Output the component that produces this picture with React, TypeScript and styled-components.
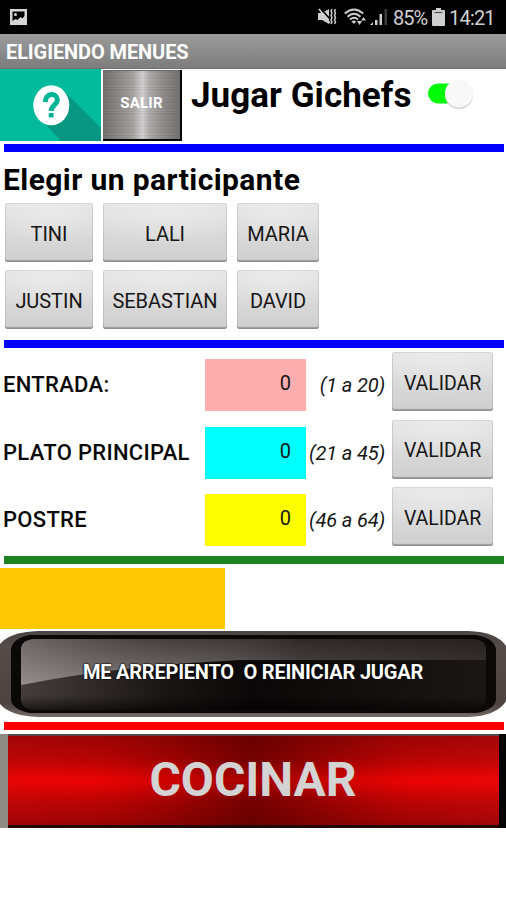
import React, { useState } from 'react';
import styled, { createGlobalStyle } from 'styled-components';

const GlobalStyle = createGlobalStyle`
  * { box-sizing: border-box; }
  body { margin: 0; background: #fff; font-family: Roboto, "Liberation Sans", sans-serif; color: #161616; }
  button { font-family: inherit; padding: 0; border: 0; margin: 0; color: inherit; }
`;

const Screen = styled.main`
  width: 506px;
  height: 900px;
  overflow: hidden;
  background: #fff;
  display: flex;
  flex-direction: column;
`;

const StatusBar = styled.header`
  height: 34px;
  flex: none;
  background: #000;
  display: flex;
  align-items: center;
  justify-content: space-between;
  padding: 0 11px 0 10px;
`;

const StatusIcons = styled.div`
  display: flex;
  align-items: center;
  color: #cfcfcf;
  svg { display: block; }
`;

const SignalGroup = styled.div`
  display: flex;
  gap: 3px;
  margin: 0 5px 0 7px;
`;

const StatusText = styled.span<{ $width: number; $spacing: number }>`
  width: ${(p) => p.$width}px;
  white-space: nowrap;
  font-size: 20px;
  line-height: 34px;
  padding-top: 1px;
  letter-spacing: ${(p) => p.$spacing}px;
`;

const Clock = styled(StatusText)`
  margin-left: 4px;
`;

const TitleBar = styled.div`
  height: 35px;
  flex: none;
  background: linear-gradient(#9b9b9b, #7d7d7d);
  border-bottom: 1px solid #707070;
  padding-left: 6px;
  color: #fff;
  font-size: 20px;
  font-weight: 700;
  line-height: 36px;
  white-space: nowrap;
  letter-spacing: -0.1px;
`;

const HeaderRow = styled.div`
  height: 72px;
  flex: none;
  display: flex;
`;

const HelpButton = styled.button`
  width: 101px;
  height: 72px;
  background: #04ba9c;
  svg { display: block; }
`;

const ExitButton = styled.button`
  width: 79px;
  height: 71px;
  margin: 1px 0 0 2px;
  padding: 0 2px 6px 0;
  box-shadow: inset -2px -2px #060606, inset 1px 1px #6b6b6b;
  color: #fff;
  font-size: 15px;
  font-weight: 700;
  letter-spacing: 0.2px;
  background:
    repeating-linear-gradient(180deg, rgba(255,255,255,0.04) 0 1px, rgba(0,0,0,0.02) 1px 3px, rgba(255,255,255,0.03) 3px 5px, rgba(0,0,0,0.03) 5px 6px),
    linear-gradient(90deg, #716d6d 0%, #8e8a8a 22%, #a3a0a0 38%, #cfcece 50%, #aaa7a7 59%, #8b8787 78%, #6e6a6a 100%);
`;

const GameTitle = styled.h1`
  margin: 0 0 0 9px;
  width: 237px;
  font-size: 35px;
  line-height: 53px;
  font-weight: 700;
  letter-spacing: 0.05px;
  white-space: nowrap;
  color: #000;
`;

const Toggle = styled.button`
  width: 46px;
  height: 36px;
  margin-top: 7px;
  background: none;
  svg { display: block; overflow: visible; }
`;

const Divider = styled.hr<{ $color: string; $top: number; $bottom: number }>`
  flex: none;
  width: 500px;
  height: 8px;
  border: 0;
  margin: ${(p) => p.$top}px 0 ${(p) => p.$bottom}px 4px;
  background: ${(p) => p.$color};
`;

const SectionTitle = styled.h2`
  margin: 0;
  padding: 7px 0 0 3px;
  height: 51px;
  flex: none;
  font-size: 30px;
  line-height: 42px;
  font-weight: 700;
  letter-spacing: 0.42px;
  white-space: nowrap;
  color: #000;
`;

const PlayerGrid = styled.div`
  flex: none;
  display: grid;
  grid-template-columns: 88px 124px 82px;
  gap: 8px 10px;
  padding-left: 5px;
`;

const GreyButton = styled.button`
  height: 59px;
  padding-top: 2px;
  border-radius: 2px;
  background: radial-gradient(ellipse 80% 70% at 50% 0, #ebebeb, transparent), linear-gradient(#e4e4e4, #cfcfcf);
  box-shadow: inset 0 0 0 1px rgba(0,0,0,0.07), inset 0 -2px 1px #9a9a9a;
  font-size: 20px;
  letter-spacing: -0.05px;
  white-space: nowrap;
`;

const ValidateButton = styled(GreyButton)`
  padding-top: 3px;
  font-size: 19.5px;
`;

const MenuRows = styled.section`
  flex: none;
  display: grid;
  gap: 8.5px;
  padding-left: 4px;
`;

const MenuRow = styled.div`
  height: 59px;
  display: grid;
  grid-template-columns: 201px 101px 86px 101px;
`;

const MenuLabel = styled.label`
  font-size: 22px;
  font-weight: 500;
  line-height: 65px;
  letter-spacing: 0.3px;
  margin-left: -1px;
  white-space: nowrap;
  color: #0a0a0a;
`;

const NumberField = styled.div<{ $color: string }>`
  height: 52px;
  margin-top: 7px;
  padding-right: 15px;
  background: ${(p) => p.$color};
  font-size: 20px;
  line-height: 48px;
  text-align: right;
`;

const Range = styled.span`
  padding-right: 7px;
  font-size: 20px;
  font-style: italic;
  line-height: 66px;
  letter-spacing: -0.15px;
  text-align: right;
  white-space: nowrap;
`;

const ResultBox = styled.div`
  flex: none;
  width: 225px;
  height: 61px;
  background: #ffc805;
`;

const ResetButton = styled.button`
  flex: none;
  display: grid;
  width: 506px;
  height: 86px;
  margin-top: 2px;
  background: none;
  svg, span { grid-area: 1 / 1; }
  svg { display: block; }
`;

const ResetText = styled.span`
  z-index: 1;
  color: #fff;
  font-size: 20px;
  font-weight: 700;
  line-height: 83px;
  letter-spacing: -0.21px;
  white-space: pre;
  text-shadow: 0 0 2px #000, 0 0 2px #000;
`;

const CookButton = styled.button`
  flex: none;
  width: 506px;
  height: 94px;
  padding-bottom: 3px;
  box-shadow: inset 8px 0 #8f8b87, inset -7px 0 #050505, inset 0 2px #5a4848, inset 0 -3px #240505;
  background:
    linear-gradient(rgba(50,0,0,0.35) 0%, rgba(60,0,0,0.22) 28%, rgba(255,0,0,0.3) 50%, rgba(60,0,0,0.2) 70%, rgba(50,0,0,0.38) 100%),
    radial-gradient(ellipse 130px 55px at 17% 52%, rgba(255,0,0,0.45), transparent),
    radial-gradient(ellipse 130px 55px at 84% 52%, rgba(255,0,0,0.45), transparent),
    linear-gradient(90deg, #de0909 0%, #cd0606 20%, #b00303 35%, #850101 50%, #a60303 62%, #cd0606 80%, #e00b0b 100%);
  color: #d3d3d3;
  font-size: 48px;
  font-weight: 700;
  line-height: 91px;
  text-align: center;
`;

const PictureIcon = () => (
  <svg width="17" height="17" viewBox="0 0 17 17">
    <path fill="#d5d5d5" fillRule="evenodd" d="M0 0h17v16H0zM2.500 2.500V12l3-2 2 1 3-3 2 1.500L14.500 7V2.500z" />
    <circle cx="5.500" cy="5.500" r="1.500" fill="#d5d5d5" />
  </svg>
);

const MuteIcon = () => (
  <svg width="19" height="18" viewBox="0 0 19 18" fill="none" stroke="currentColor">
    <path d="M0 5h4l7-4v15l-7-4H0z" fill="currentColor" stroke="none" />
    <path d="M3 1l9 10" stroke="#000" strokeWidth="1.500" />
    <path d="M1 1l11 14" strokeWidth="1.600" />
    <path d="M14 1l-1 2 1 2-1 2.500 1 2-1 2.500 1 2-1 2M17.500 1l-1 2 1 2-1 2.500 1 2-1 2.500 1 2-1 2" strokeWidth="1.500" />
  </svg>
);

const WifiIcon = () => (
  <svg width="23" height="18" viewBox="0 0 23 18" fill="none" stroke="currentColor" strokeWidth="1.900">
    <path d="M.8 5.500Q10 -2.500 19.200 5.500M3.500 8.700Q10 2.800 16.500 8.700M6 11.500Q10 8 14 11.500" />
    <path d="M7.500 13.500Q10 11.500 12 13.500L10 16z" fill="currentColor" stroke="none" />
    <path d="M13 13h5l-2.500 4zM17 12.500h5L19.500 9z" fill="currentColor" stroke="none" />
  </svg>
);

const SignalIcon = () => (
  <svg width="18" height="18" viewBox="0 0 18 18" fill="currentColor">
    <path d="M0 17l3-3v3zM5 12h2.500v5H5zM9.500 6H12v11H9.500z" />
    <path d="M14.500 1H17v16h-2.500z" fill="#3c3c3c" />
  </svg>
);

const BatteryIcon = () => (
  <svg width="13" height="18" viewBox="0 0 13 18">
    <path d="M4 0h5v2h3q1 0 1 1v14q0 1-1 1H1q-1 0-1-1V3q0-1 1-1h3z" fill="#cfcfcf" />
    <path d="M2.500 4.500h8" stroke="#555" strokeWidth="1.200" />
  </svg>
);

const HelpIcon = () => (
  <svg width="101" height="72" viewBox="0 0 101 72">
    <path d="M64 22L101 59V72H61L40 49z" fill="#079781" />
    <ellipse cx="51.300" cy="36.300" rx="18" ry="20" fill="#fff" />
    <path d="M45.300 33c0-9.500 12-9.500 12-2.300 0 5.300-6 5-6 11.300" fill="none" stroke="#06b497" strokeWidth="5" />
    <rect x="48.700" y="44" width="5" height="4.600" rx="1" fill="#06b497" />
  </svg>
);

const Gloss = () => (
  <svg width="506" height="86" viewBox="0 0 506 86">
    <defs>
      <linearGradient id="rim" x2="0" y2="1">
        <stop offset="0" stopColor="#4a4442" /><stop offset=".2" stopColor="#554c4a" />
        <stop offset=".85" stopColor="#4c4341" /><stop offset="1" stopColor="#766c6a" />
      </linearGradient>
      <linearGradient id="face">
        <stop offset="0" stopColor="#453d3c" /><stop offset=".3" stopColor="#1b1717" />
        <stop offset=".5" stopColor="#090707" /><stop offset="1" stopColor="#1c1717" />
      </linearGradient>
      <linearGradient id="shine" x2="0" y2="1">
        <stop offset="0" stopColor="#3f3a38" /><stop offset="1" stopColor="#857c7c" />
      </linearGradient>
      <linearGradient id="fade">
        <stop offset="0" stopColor="#aaa0a0" stopOpacity=".45" /><stop offset=".35" stopColor="#555" stopOpacity=".15" />
        <stop offset=".6" stopColor="#151111" stopOpacity=".4" />
        <stop offset="1" stopColor="#151111" stopOpacity=".6" />
      </linearGradient>
      <linearGradient id="depth" x2="0" y2="1">
        <stop offset=".5" stopOpacity="0" /><stop offset="1" stopOpacity=".6" />
      </linearGradient>
    </defs>
    <path d="M38 0H468Q497 1 506 15V70Q497 85 468 86H38Q10 85 0 73V13Q10 1 38 0z" fill="url(#rim)" />
    <path d="M30 4H476Q494 7 496 18V69Q494 79 476 82H30Q13 79 11 69V18Q13 7 30 4z" fill="#0b0808" />
    <path d="M34 8H472Q485 9 486 17V70Q485 77 472 79H34Q22 77 21 70V17Q22 9 34 8z" fill="url(#face)" />
    <path d="M34 8H472Q485 9 486 17V29H240Q115 35 21 54V17Q22 9 34 8z" fill="url(#shine)" />
    <path d="M34 8H472Q485 9 486 17V29H240Q115 35 21 54V17Q22 9 34 8z" fill="url(#fade)" />
    <path d="M21 50H486V70Q485 77 472 79H34Q22 77 21 70z" fill="url(#depth)" />
  </svg>
);

const players = ['TINI', 'LALI', 'MARIA', 'JUSTIN', 'SEBASTIAN', 'DAVID'];
const courses = [
  { label: 'ENTRADA:', color: '#ffaeb0', range: '(1 a 20)' },
  { label: 'PLATO PRINCIPAL', color: '#00ffff', range: '(21 a 45)' },
  { label: 'POSTRE', color: '#ffff00', range: '(46 a 64)' },
];

export default function App() {
  const [playing, setPlaying] = useState(true);
  return (
    <Screen>
      <GlobalStyle />
      <StatusBar>
        <PictureIcon />
        <StatusIcons>
          <MuteIcon />
          <SignalGroup>
            <WifiIcon />
            <SignalIcon />
          </SignalGroup>
          <StatusText $width={39} $spacing={-1}>85%</StatusText>
          <BatteryIcon />
          <Clock $width={46} $spacing={-0.8}>14:21</Clock>
        </StatusIcons>
      </StatusBar>
      <TitleBar>ELIGIENDO MENUES</TitleBar>
      <HeaderRow>
        <HelpButton aria-label="Ayuda"><HelpIcon /></HelpButton>
        <ExitButton>SALIR</ExitButton>
        <GameTitle>Jugar Gichefs</GameTitle>
        <Toggle role="switch" aria-checked={playing} onClick={() => setPlaying(!playing)}>
          <svg width="46" height="36" viewBox="0 0 46 36">
            <rect y="7.500" width="42" height="20" rx="10" fill={playing ? '#00fb08' : '#bbb'} />
            <circle cx={playing ? 31 : 14} cy="19" r="14" fill="#d0d0d0" />
            <circle cx={playing ? 31 : 14} cy="17.500" r="14" fill="#f8f8f8" />
          </svg>
        </Toggle>
      </HeaderRow>
      <Divider $color="#0000fb" $top={3} $bottom={0} />
      <SectionTitle>Elegir un participante</SectionTitle>
      <PlayerGrid>
        {players.map((name) => <GreyButton key={name}>{name}</GreyButton>)}
      </PlayerGrid>
      <Divider $color="#0000fb" $top={11} $bottom={4} />
      <MenuRows>
        {courses.map((c) => (
          <MenuRow key={c.label}>
            <MenuLabel>{c.label}</MenuLabel>
            <NumberField $color={c.color}>0</NumberField>
            <Range>{c.range}</Range>
            <ValidateButton>VALIDAR</ValidateButton>
          </MenuRow>
        ))}
      </MenuRows>
      <Divider $color="#1f8420" $top={10} $bottom={4} />
      <ResultBox />
      <ResetButton>
        <Gloss />
        <ResetText>{'ME ARREPIENTO  O REINICIAR JUGAR'}</ResetText>
      </ResetButton>
      <Divider $color="#fb0000" $top={5} $bottom={4} />
      <CookButton>COCINAR</CookButton>
    </Screen>
  );
}
